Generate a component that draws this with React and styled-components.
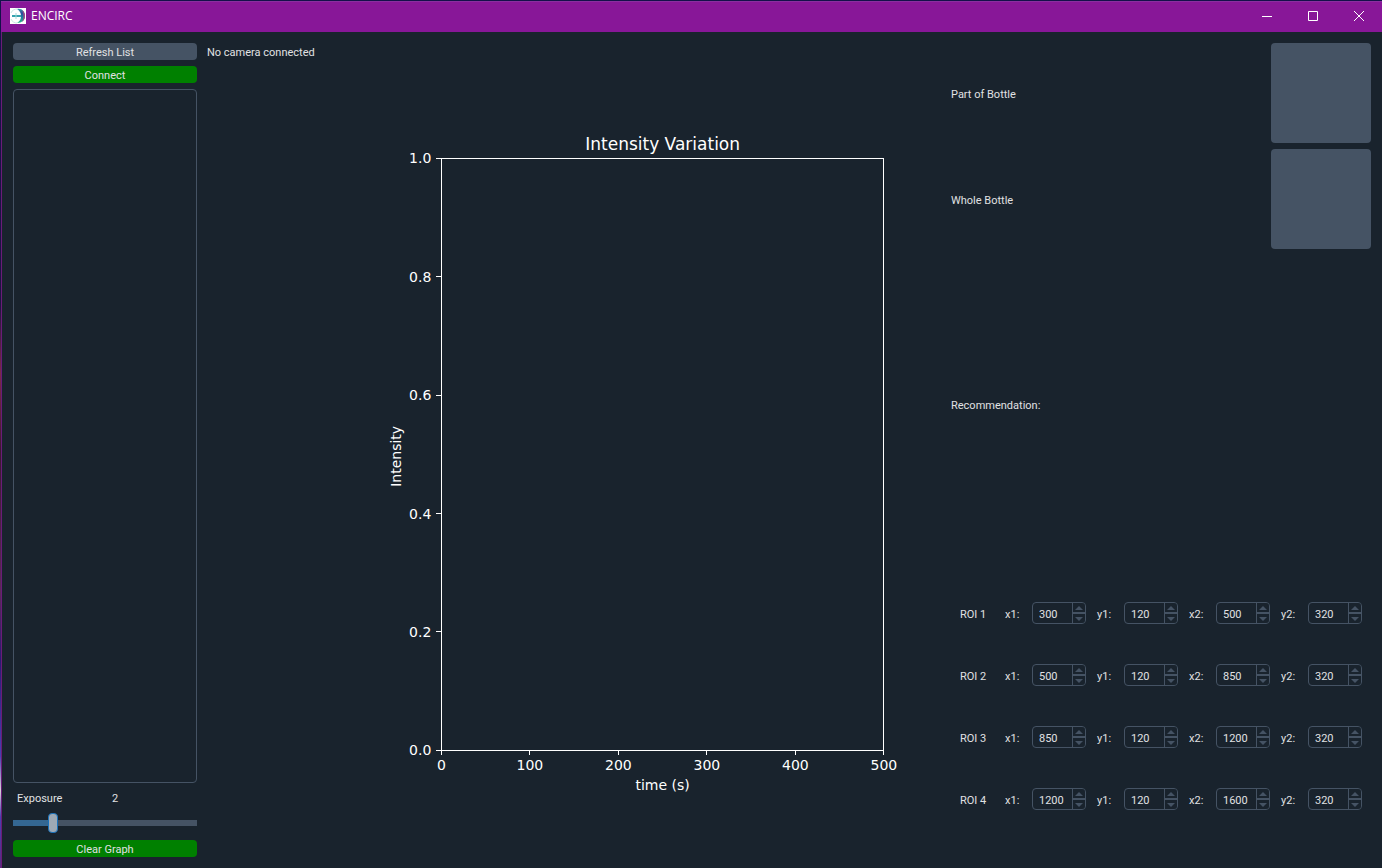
import React, { useId, useState } from "react";
import styled, { createGlobalStyle } from "styled-components";

const color = {
  window: "#19232d",
  control: "#455364",
  text: "#e0e1e3",
  title: "#881798",
  green: "#008000",
  fill: "#346792",
  handle: "#9da9b5",
  handleEdge: "#1a72bb",
};

const GlobalStyle = createGlobalStyle`
  * { box-sizing: border-box; }
  body {
    margin: 0;
    background: ${color.window};
    color: ${color.text};
    font: 11px/20px Roboto, "Noto Sans", sans-serif;
  }
  button, input { font: inherit; color: inherit; }
`;

const Window = styled.div`
  display: flex;
  flex-direction: column;
  min-height: 100vh;
  border-top: 1px solid;
  border-left: 1px solid;
  border-image: linear-gradient(#14104a, #1d1440 35%, #7a2a48 43%, #3a1830 52%, #5a2a58 68%, #2a1a70 76%, #4a40b0 87%, #d8d0d8 91%, #4a40b0 94%, #5a2a80) 1;
`;

const TitleBar = styled.header`
  display: flex;
  align-items: center;
  height: 31px;
  padding: 0 0 2px 9px;
  background: ${color.title};
  border-top: 1px solid #8a2f9f;
  color: #fff;
`;

const Title = styled.h1`
  flex: 1;
  margin: 0;
  padding-left: 5px;
  font: 12px/18px "Open Sans", sans-serif;
`;

const WindowButton = styled.button`
  display: grid;
  place-items: center;
  width: 46px;
  height: 28px;
  padding: 0;
  border: 0;
  background: none;
`;

const Body = styled.main`
  flex: 1;
  display: grid;
  grid-template-columns: 184px 167px minmax(0, 1fr) 420px;
  padding: 11px;
  border-left: 1px solid #6a1c78;
`;

const Sidebar = styled.section`
  display: flex;
  flex-direction: column;
  gap: 6px;
`;

const PushButton = styled.button`
  height: 17px;
  padding: 2px 0 0;
  border: 0;
  border-radius: 4px;
  line-height: 15px;
  background: ${(p) => (p.$go ? color.green : color.control)};
`;

const CameraList = styled.div`
  flex: 1;
  border: 1px solid ${color.control};
  border-radius: 4px;
`;

const ExposureRow = styled.div`
  display: grid;
  grid-template-columns: 1fr 1fr;
  gap: 6px;
  height: 18px;

  label, output { padding-left: 4px; }
`;

const Slider = styled.input`
  appearance: none;
  width: 100%;
  height: 20px;
  margin: 0 0 1px;
  background: none;

  &::-webkit-slider-runnable-track {
    height: 6px;
    background: linear-gradient(
      to right,
      ${color.fill} var(--level),
      ${color.control} var(--level)
    );
  }

  &::-webkit-slider-thumb {
    appearance: none;
    width: 10px;
    height: 20px;
    margin-top: -7px;
    border: 1px solid ${color.handleEdge};
    border-radius: 4px;
    background: ${color.handle};
  }
`;

const Status = styled.p`
  margin: 0;
  padding-left: 10px;
`;

const ChartPane = styled.section`
  display: flex;
  padding: 23px 10px 22px 6px;
`;

const Plot = styled.svg`
  flex: 1;
  width: 100%;
  overflow: visible;
  font: 14px "DejaVu Sans", sans-serif;
  fill: #fff;

  line, rect { stroke: #fff; fill: none; shape-rendering: crispEdges; }
`;

const PlotTitle = styled.text`
  font-size: 17px;
`;

const Results = styled.section`
  display: flex;
  flex-direction: column;
  gap: 6px;
`;

const ResultRow = styled.div`
  display: flex;
  align-items: center;
  justify-content: space-between;

  span { padding-top: 3px; }
`;

const Swatch = styled.button`
  width: 100px;
  height: 100px;
  padding: 0;
  border: 0;
  border-radius: 4px;
  background: ${color.control};
`;

const Recommendation = styled.div`
  flex: 1;
  display: flex;
  align-items: center;
  padding-top: 2px;
`;

const Regions = styled.div`
  display: flex;
  flex-direction: column;
  gap: 40px;
  padding: 41px 9px 47px;
`;

const RegionRow = styled.div`
  display: flex;
  align-items: center;
  justify-content: space-between;
  height: 22px;
`;

const RegionName = styled.span`
  width: 34px;
  padding-top: 3px;
`;

const Field = styled.div`
  display: flex;
  align-items: center;

  label { width: 27px; padding-top: 3px; }
`;

const SpinFrame = styled.div`
  display: flex;
  width: 54px;
  height: 22px;
  border: 1px solid ${color.control};
  border-radius: 4px;
  overflow: hidden;
`;

const SpinInput = styled.input`
  flex: 1;
  min-width: 0;
  padding: 3px 0 0 6px;
  line-height: 17px;
  border: 0;
  outline: 0;
  background: none;
  appearance: textfield;

  &::-webkit-inner-spin-button { appearance: none; margin: 0; }
`;

const SpinButtons = styled.div`
  display: grid;
  grid-template-rows: 1fr 1fr;
  gap: 2px;
  width: 13px;
  border-left: 1px solid ${color.control};
  background: ${color.control};
`;

const SpinButton = styled.button`
  display: grid;
  place-items: center;
  padding: 0;
  border: 0;
  background: ${color.window};

  svg { fill: ${color.control}; }
`;

function SpinBox({ label, start }) {
  const id = useId();
  const [value, setValue] = useState(start);
  return (
    <Field>
      <label htmlFor={id}>{label}:</label>
      <SpinFrame>
        <SpinInput id={id} type="number" value={value} onChange={(e) => setValue(Number(e.target.value))} />
        <SpinButtons>
          <SpinButton type="button" onClick={() => setValue(value + 1)}>
            <svg width="8" height="4"><path d="M0 4L4 0L8 4Z" /></svg>
          </SpinButton>
          <SpinButton type="button" onClick={() => setValue(value - 1)}>
            <svg width="8" height="4"><path d="M0 0L4 4L8 0Z" /></svg>
          </SpinButton>
        </SpinButtons>
      </SpinFrame>
    </Field>
  );
}

const AXES = { left: 12.5, right: 90, top: 12, bottom: 89 };
const xTicks = [0, 100, 200, 300, 400, 500];
const yTicks = [0, 0.2, 0.4, 0.6, 0.8, 1];

function IntensityPlot() {
  const { left, right, top, bottom } = AXES;
  const midX = `${(left + right) / 2}%`;
  return (
    <Plot>
      <rect x={`${left}%`} y={`${top}%`} width={`${right - left}%`} height={`${bottom - top}%`} />
      <PlotTitle x={midX} y={`${top}%`} dy="-8" textAnchor="middle">Intensity Variation</PlotTitle>
      {xTicks.map((t) => {
        const x = `${left + (t / 500) * (right - left)}%`;
        return (
          <g key={t}>
            <svg x={x} y={`${bottom}%`} overflow="visible"><line y2="5" /></svg>
            <text x={x} y={`${bottom}%`} dy="20" textAnchor="middle">{t}</text>
          </g>
        );
      })}
      {yTicks.map((t) => {
        const y = `${bottom - t * (bottom - top)}%`;
        return (
          <g key={t}>
            <svg x={`${left}%`} y={y} overflow="visible"><line x1="-5" x2="0" /></svg>
            <text x={`${left}%`} y={y} dx="-10" dy="5" textAnchor="end">{t.toFixed(1)}</text>
          </g>
        );
      })}
      <text x={midX} y={`${bottom}%`} dy="40" textAnchor="middle">time (s)</text>
      <svg x={`${left}%`} y={`${(top + bottom) / 2}%`} overflow="visible">
        <text transform="translate(-40 2) rotate(-90)" textAnchor="middle">Intensity</text>
      </svg>
    </Plot>
  );
}

function AppIcon() {
  return (
    <svg width="16" height="16" viewBox="0 0 16 16">
      <defs>
        <linearGradient id="shell" x1="0" y1="0" x2="0" y2="1">
          <stop offset="0" stopColor="#38a0a8" />
          <stop offset="0.3" stopColor="#2d4a9c" />
          <stop offset="0.6" stopColor="#1d7fa0" />
          <stop offset="1" stopColor="#2bb58a" />
        </linearGradient>
      </defs>
      <rect width="16" height="16" fill="#fff" />
      <path d="M7 1C12 0 15 4 15 8S12 15 7 15C10 13 11 11 11 8S10 3 7 1Z" fill="url(#shell)" />
      <path d="M12 2C16 5 16 11 12 14C14 10 14 6 12 2Z" fill="#a04a80" />
      <path d="M2 8H11" stroke="#35a3ae" strokeWidth="2" />
      <path d="M6 5V11" stroke="#a6dcd8" />
      <path d="M1 5C2 2 5 1 7 1M1 11C2 14 5 15 7 15" stroke="#c6e9e2" fill="none" />
    </svg>
  );
}

const regions = [
  [300, 120, 500, 320],
  [500, 120, 850, 320],
  [850, 120, 1200, 320],
  [1200, 120, 1600, 320],
];
const corners = ["x1", "y1", "x2", "y2"];

export default function App() {
  const [exposure, setExposure] = useState(2);
  return (
    <Window>
      <GlobalStyle />
      <TitleBar>
        <AppIcon />
        <Title>ENCIRC</Title>
        <WindowButton type="button">
          <svg width="10" height="10" stroke="#fff"><path d="M0 5.5H10" /></svg>
        </WindowButton>
        <WindowButton type="button">
          <svg width="10" height="10" stroke="#fff" fill="none"><path d="M.5 .5H9.5V9.5H.5Z" /></svg>
        </WindowButton>
        <WindowButton type="button">
          <svg width="10" height="10" stroke="#fff"><path d="M0 0L10 10M10 0L0 10" /></svg>
        </WindowButton>
      </TitleBar>
      <Body>
        <Sidebar>
          <PushButton type="button">Refresh List</PushButton>
          <PushButton type="button" $go>Connect</PushButton>
          <CameraList />
          <ExposureRow>
            <label htmlFor="exposure">Exposure</label>
            <output htmlFor="exposure">{exposure}</output>
          </ExposureRow>
          <Slider
            id="exposure"
            type="range"
            min="0"
            max="10"
            value={exposure}
            onChange={(e) => setExposure(Number(e.target.value))}
            style={{ "--level": `${exposure * 10}%` }}
          />
          <PushButton type="button" $go>Clear Graph</PushButton>
        </Sidebar>
        <Status>No camera connected</Status>
        <ChartPane>
          <IntensityPlot />
        </ChartPane>
        <Results>
          <ResultRow>
            <span id="part">Part of Bottle</span>
            <Swatch type="button" aria-labelledby="part" />
          </ResultRow>
          <ResultRow>
            <span id="whole">Whole Bottle</span>
            <Swatch type="button" aria-labelledby="whole" />
          </ResultRow>
          <Recommendation>Recommendation:</Recommendation>
          <Regions>
            {regions.map((values, i) => (
              <RegionRow key={i}>
                <RegionName>ROI {i + 1}</RegionName>
                {values.map((v, j) => (
                  <SpinBox key={corners[j]} label={corners[j]} start={v} />
                ))}
              </RegionRow>
            ))}
          </Regions>
        </Results>
      </Body>
    </Window>
  );
}
